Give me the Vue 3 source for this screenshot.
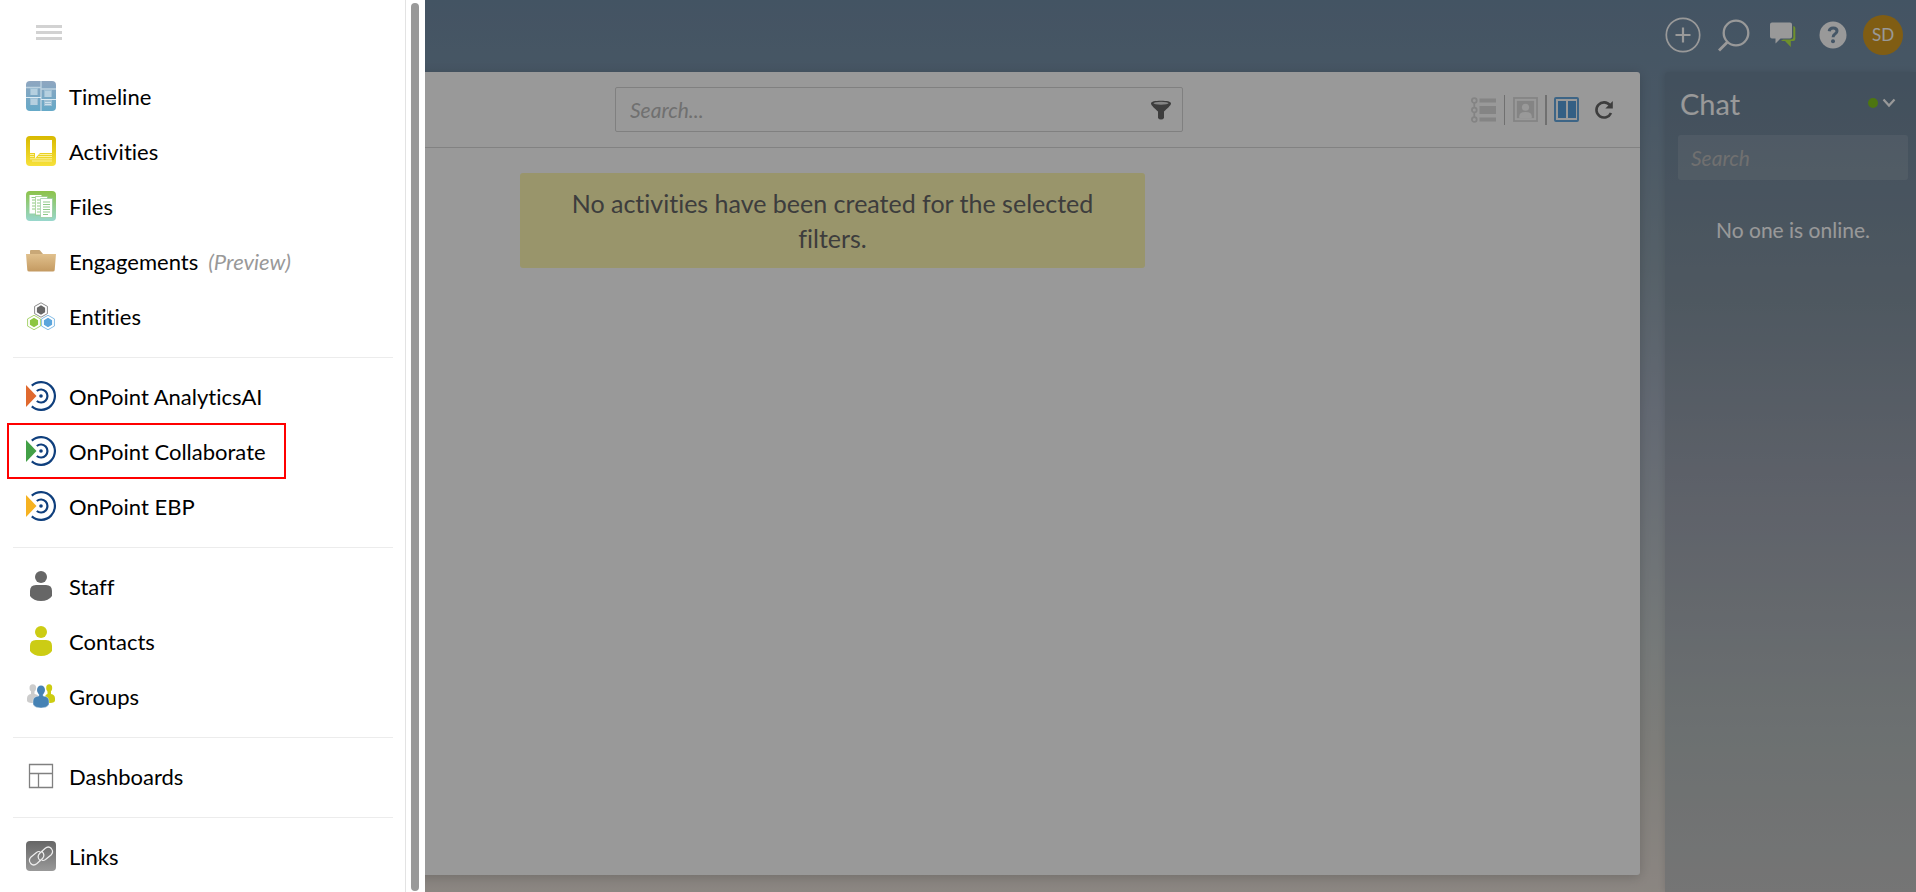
<script setup>
const groups = [
  [
    { name: 'Timeline', icon: 'timeline' },
    { name: 'Activities', icon: 'activities' },
    { name: 'Files', icon: 'files' },
    { name: 'Engagements', icon: 'folder', note: '(Preview)' },
    { name: 'Entities', icon: 'entities' },
  ],
  [
    { name: 'OnPoint AnalyticsAI', icon: 'onpoint', tone: 'orange' },
    { name: 'OnPoint Collaborate', icon: 'onpoint', tone: 'green', marked: true },
    { name: 'OnPoint EBP', icon: 'onpoint', tone: 'amber' },
  ],
  [
    { name: 'Staff', icon: 'person', tone: 'gray' },
    { name: 'Contacts', icon: 'person', tone: 'lime' },
    { name: 'Groups', icon: 'groups' },
  ],
  [{ name: 'Dashboards', icon: 'dashboards' }],
  [{ name: 'Links', icon: 'links' }],
]
</script>

<template>
  <div class="app">
    <header class="topbar">
      <button class="bare" aria-label="Add">
        <svg width="36" height="36" viewBox="0 0 36 36" fill="none" stroke="#fff">
          <circle cx="18" cy="18" r="16.7" stroke-width="1.7" />
          <path d="M18 10.500v15M10.500 18h15" stroke-width="2.200" />
        </svg>
      </button>
      <button class="bare" aria-label="Search">
        <svg width="32" height="34" viewBox="0 0 32 34" fill="none" stroke="#fff" stroke-width="2.300">
          <circle cx="18" cy="15" r="12.300" />
          <path d="M9.500 24 1 32.500" stroke-width="2.800" />
        </svg>
      </button>
      <button class="bare" aria-label="Messages">
        <svg width="26" height="26" viewBox="0 0 26 26">
          <path d="M23.300 4q2 .5 2 2v11q0 2-2 2h-2.500v6L15 19h-4l2-1.500h8q2.300 0 2.300-2z" fill="#b8f04a" />
          <path d="M2 .5h18q2 0 2 2v12q0 2-2 2H10.500L5.500 21.500v-5H2q-2 0-2-2v-12q0-2 2-2z" fill="#fff" />
        </svg>
      </button>
      <button class="bare help" aria-label="Help">
        <svg width="28" height="28" viewBox="0 0 28 28">
          <circle cx="14" cy="14" r="13.500" fill="#fff" />
          <path d="M10.200 10.300q.4-3.300 4-3.300 3.800 0 3.800 3 0 1.800-2 3.100-1.900 1.200-1.900 3.100" fill="none" stroke="#738fab" stroke-width="3" />
          <circle cx="14" cy="20.300" r="2" fill="#738fab" />
        </svg>
      </button>
      <button class="avatar">SD</button>
    </header>

    <div class="body">
      <main class="panel">
        <div class="toolbar">
          <div class="searchbox">
            <input type="text" placeholder="Search..." aria-label="Search activities" />
            <button class="bare" aria-label="Filter">
              <svg width="22" height="20" viewBox="0 0 22 20">
                <path d="M1 3.500C1 1.500 5 .8 11 .8s10 .7 10 2.700c0 2-4 5-7 8v6.500q-1 1.500-3 1.500t-3-1.500V11.500c-3-3-7-6-7-8z" fill="#666" />
                <ellipse cx="11" cy="3.300" rx="7.500" ry="1.500" fill="#ddd" />
              </svg>
            </button>
          </div>
          <div class="views">
            <button class="bare" aria-label="List view">
              <svg width="26" height="26" viewBox="0 0 26 26" fill="#dcdcdc">
                <path d="M8.500 1.500H25v4H8.500zM8.500 9H25v8H8.500zM8.500 20.500H25v4H8.500z" />
                <g fill="none" stroke="#dcdcdc" stroke-width="1.800">
                  <circle cx="3.300" cy="3.500" r="2.400" /><circle cx="3.300" cy="13" r="2.400" /><circle cx="3.300" cy="22.500" r="2.400" />
                  <path d="M3.300 6v4.500M3.300 15.500V20" />
                </g>
              </svg>
            </button>
            <span class="sep"></span>
            <button class="bare" aria-label="Card view">
              <svg width="25" height="25" viewBox="0 0 26 26">
                <rect x="1" y="1" width="24" height="24" fill="none" stroke="#dcdcdc" stroke-width="1.800" />
                <rect x="4" y="4" width="18" height="18" fill="#dcdcdc" />
                <circle cx="13" cy="10.700" r="3.700" fill="#fff" />
                <path d="M6.500 22v-2q0-4.500 6.500-4.500t6.500 4.500v2z" fill="#fff" />
              </svg>
            </button>
            <span class="sep bold"></span>
            <button class="bare" aria-label="Column view">
              <svg width="25" height="25" viewBox="0 0 25 25">
                <rect x="1" y="1" width="23" height="23" rx="1" fill="none" stroke="#66a9df" stroke-width="2" />
                <path d="M4 4h8v17H4zM14 4h8v17h-8z" fill="#559fdd" />
              </svg>
            </button>
            <button class="bare refresh" aria-label="Refresh">
              <svg width="20" height="20" viewBox="0 0 20 20">
                <path d="M16 5.200A7.600 7.600 0 1 0 17 13" fill="none" stroke="#666" stroke-width="2.600" />
                <path d="M18.800 1v7.500h-7.500z" fill="#666" />
              </svg>
            </button>
          </div>
        </div>
        <p class="notice">No activities have been created for the selected filters.</p>
      </main>

      <aside class="chat">
        <div class="chat-head">
          <h2>Chat</h2>
          <button class="bare status" aria-label="Chat status">
            <span class="dot"></span>
            <svg width="14" height="10" viewBox="0 0 14 10"><path d="M1.500 1.500 7 7.500 12.500 1.500" fill="none" stroke="#fff" stroke-width="2.200" /></svg>
          </button>
        </div>
        <input type="text" placeholder="Search" aria-label="Search chat" />
        <p>No one is online.</p>
      </aside>
    </div>

    <div class="shade"></div>

    <nav class="drawer">
      <div class="menu">
        <button class="bare burger" aria-label="Close menu"><i></i><i></i><i></i></button>
        <ul v-for="(group, g) in groups" :key="g">
          <li v-for="item in group" :key="item.name" :class="{ marked: item.marked }">
            <a href="#">
              <svg width="30" height="30" viewBox="0 0 30 30" :class="item.tone" aria-hidden="true">
                <template v-if="item.icon === 'timeline'">
                  <defs><linearGradient id="tl" x2="0" y2="1"><stop stop-color="#8fa6c0" /><stop offset="1" stop-color="#65a9c8" /></linearGradient></defs>
                  <rect width="30" height="30" rx="4" fill="url(#tl)" />
                  <path d="M0 6.500h15M15 8h15M15 0v30" stroke="#bdd2e0" stroke-width="1.400" />
                  <path d="M0 16.500h15M15 18.500h15" stroke="#dcebf3" stroke-width="1.200" />
                  <path d="M4 7h8v7H4zM18 9h8v7h-8zM4 17h8v7H4zM18 19h8v6h-8z" fill="#9dbfd4" />
                  <path d="M5 9h6M5 11h6M5 13h6M19 11h6M19 13h6M19 15h6M5 19h6M5 21h6M5 23h6M19 21.500h6M19 23.500h6" stroke="#d3e4ee" stroke-width=".9" />
                </template>
                <template v-else-if="item.icon === 'activities'">
                  <defs><linearGradient id="ac" x2="0" y2="1"><stop stop-color="#d8b900" /><stop offset="1" stop-color="#f7e13a" /></linearGradient></defs>
                  <rect width="30" height="30" rx="4" fill="url(#ac)" />
                  <path d="M4 4h22v13H14l-5 5.500V17H4z" fill="#fff" />
                  <path d="M4 18.500h4M13.500 18.500H26M4 20.500h4M12 20.500h14M4 22.800h22M6 25h20" stroke="#fbf2a0" stroke-width="1" />
                </template>
                <template v-else-if="item.icon === 'files'">
                  <defs><linearGradient id="fi" x2="0" y2="1"><stop stop-color="#8cc34a" /><stop offset="1" stop-color="#98d7cd" /></linearGradient></defs>
                  <rect width="30" height="30" rx="4" fill="url(#fi)" />
                  <path d="M3.500 4h12v18.500h-12z" fill="#fff" />
                  <path d="M5.500 6.500h4M6 9h3M6 12h3M6 15h3M6 18h3" stroke="#91ca82" />
                  <path d="M9.500 5.500h12V24h-12z" fill="#fff" stroke="#91c77e" stroke-width=".7" />
                  <path d="M11 9h3M11 12h3M11 15h3M11 18h3M11 21h3" stroke="#91ca82" />
                  <path d="M14.500 7.500h12v19h-12z" fill="#fff" stroke="#91c99b" stroke-width=".7" />
                  <path d="M17 11h7M17 13.500h7M17 16h7M17 18.500h7M17 21h7M17 23.500h5" stroke="#8fc98a" />
                </template>
                <template v-else-if="item.icon === 'folder'">
                  <defs><linearGradient id="fo" x2="0" y2="1"><stop stop-color="#e0c08d" /><stop offset="1" stop-color="#c49a61" /></linearGradient></defs>
                  <path d="M4 9V5q0-1 1-1h8q1 0 1.500 1L17 8h9v3H4z" fill="#c9a877" />
                  <path d="M0 8h30l-1.300 16q0 1.500-2 1.500H3.300q-2 0-2-1.500z" fill="url(#fo)" />
                </template>
                <template v-else-if="item.icon === 'entities'">
                  <g v-for="h in [['#666', 15, 9], ['#8cc63f', 8, 21.500], ['#5ba5dc', 22, 21.500]]" :key="h[0]" :transform="`translate(${h[1]} ${h[2]})`">
                    <path d="M0-7.200 6.400-3.600v7.200L0 7.200-6.400 3.600v-7.200z" fill="#fff" :stroke="h[0]" stroke-width="1" stroke-opacity=".75" />
                    <path d="M0-4.700 4.100-2.350v4.700L0 4.700-4.100 2.350v-4.700z" :fill="h[0]" />
                  </g>
                </template>
                <template v-else-if="item.icon === 'onpoint'">
                  <path d="M0 4v22l10.500-11z" fill="currentColor" />
                  <g fill="none" stroke="#0f3f7d" stroke-width="2.200">
                    <path d="M5.800 4.600A13.900 13.900 0 1 1 5.800 25.400" />
                    <path d="M10.800 10A6.500 6.500 0 1 1 10.800 20" />
                  </g>
                  <circle cx="15" cy="15" r="1.800" fill="#0f3f7d" />
                </template>
                <template v-else-if="item.icon === 'person'">
                  <circle cx="15" cy="6" r="6" fill="currentColor" />
                  <path d="M10 14h10q6 0 6 6v5q-3.500 5-11 5T4 25v-5q0-6 6-6z" fill="currentColor" />
                </template>
                <template v-else-if="item.icon === 'groups'">
                  <g fill="#ccc"><ellipse cx="6.800" cy="7" rx="3.300" ry="3.700" /><path d="M5 10h3.500v3q4.500.5 4.500 4v5H6q-5-.5-5-2.500v-2q0-4 4-4.500z" /></g>
                  <g fill="#cc1"><ellipse cx="23.200" cy="7" rx="3" ry="3.700" /><path d="M21.500 10H25v3q4 .5 4 4.500v2q0 2-5 2.500h-5v-5q0-3.500 2.500-4z" /></g>
                  <g fill="#4682b4" stroke="#fff" stroke-width=".4"><path d="M12.800 14V11q-1.800-5.800 2.200-5.800t2.200 5.800v4q5.800.5 5.800 5v3.500q-2 3.500-8 3.500t-8-3.500V20q0-4.500 5.800-5z" /><ellipse cx="15" cy="9" rx="4" ry="4.500" stroke="none" /></g>
                </template>
                <template v-else-if="item.icon === 'dashboards'">
                  <path d="M3.500 3.500h23v23h-23zM3.500 12.500h23M12.500 12.500v14" fill="none" stroke="#808080" stroke-width="1.300" />
                </template>
                <template v-else>
                  <defs><linearGradient id="li" x2="0" y2="1"><stop stop-color="#666" /><stop offset="1" stop-color="#999" /></linearGradient></defs>
                  <rect width="30" height="30" rx="4" fill="url(#li)" />
                  <g fill="none" stroke="#eee" stroke-width="1.200" stroke-linecap="round" stroke-linejoin="round">
                    <path d="M14 19.500Q10.500 16 13.500 12.500L19 7.500Q22.500 4.500 25.300 7.500 28 11 25 14L19.500 18.500Q17.500 20 16.200 19.200" />
                    <path d="M16 10.500Q19.500 14 16.500 17.500L11 22.500Q7.500 25.500 4.700 22.500 2 19 5 16L10.500 11.500Q12.500 10 13.800 10.800" />
                  </g>
                </template>
              </svg>
              <span>{{ item.name }}</span>
              <em v-if="item.note">{{ item.note }}</em>
            </a>
          </li>
        </ul>
      </div>
      <div class="track"><div class="thumb"></div></div>
    </nav>
  </div>
</template>

<style>
body {
  margin: 0;
}
</style>

<style scoped>
.app {
  min-height: 100vh;
  display: flex;
  flex-direction: column;
  box-sizing: border-box;
  font-family: Lato, "Open Sans", sans-serif;
  font-size: 22px;
  font-variant-ligatures: none;
  background: linear-gradient(#718ca6 0%, #7a92a8 12%, #8fa1ae 30%, #a5afbf 46%, #c4caca 72%, #d2d1cb 84%, #e8dfd8 100%);
}
.bare {
  border: 0;
  padding: 0;
  background: none;
  display: flex;
  cursor: pointer;
}
.topbar {
  height: 72px;
  box-sizing: border-box;
  display: flex;
  align-items: center;
  justify-content: flex-end;
  padding: 0 13px 3px 0;
}
.topbar .bare {
  margin-right: 17px;
}
.topbar .bare:nth-child(2) {
  margin-right: 20px;
}
.topbar .bare:nth-child(3) {
  margin-right: 23px;
}
.topbar .help {
  margin-right: 16px;
}
.avatar {
  width: 40px;
  height: 40px;
  padding: 0;
  border: 0;
  border-radius: 50%;
  background: #d69c20;
  color: #fff;
  font: 17px Lato, sans-serif;
}
.body {
  flex: 1;
  display: flex;
}
.panel {
  flex: 1;
  margin: 0 25px 17px;
  background: #fff;
  border-radius: 0 3px 3px 3px;
  box-shadow: 0 2px 12px rgba(0, 0, 0, .18);
}
.toolbar {
  display: flex;
  align-items: center;
  justify-content: flex-end;
  height: 75px;
  padding-right: 26px;
  border-bottom: 1px solid #d9d9d9;
}
.searchbox {
  width: 568px;
  height: 45px;
  box-sizing: border-box;
  display: flex;
  align-items: center;
  margin-right: 288px;
  padding: 0 10px 0 14px;
  border: 1px solid #d5d5d5;
  border-radius: 2px;
}
.searchbox input {
  flex: 1;
  min-width: 0;
  padding: 0;
  border: 0;
  outline: 0;
  background: none;
  font: 21px Lato, sans-serif;
}
.searchbox input::placeholder {
  color: #bbb;
  font-style: italic;
}
.views {
  display: flex;
  align-items: center;
}
.sep {
  width: 1px;
  height: 30px;
  margin: 0 8px 0 7px;
  background: #bbb;
}
.sep.bold {
  width: 2px;
  margin: 0 7px;
}
.refresh {
  margin-left: 15px;
}
.notice {
  box-sizing: border-box;
  max-width: 625px;
  margin: 25px auto;
  padding: 13px 25px 12px;
  border-radius: 3px;
  background: #fff8b3;
  color: #666;
  font-size: 25px;
  line-height: 35px;
  text-align: center;
}
.chat {
  width: 251px;
  box-sizing: border-box;
  padding: 13px 8px 0 13px;
  border-radius: 3px 0 0 0;
  background: linear-gradient(#6e859b, #8393a1 28%, #9da3b0 52%, #b4bbbc 80%, #c3c3c3);
  color: #fff;
  box-shadow: -1px 0 6px rgba(0, 0, 0, .1);
}
.chat-head {
  display: flex;
  align-items: center;
  justify-content: space-between;
  height: 36px;
  padding: 0 12px 0 2px;
}
.chat h2 {
  margin: 0;
  font-weight: 400;
  font-size: 29px;
}
.status {
  align-items: center;
  gap: 4px;
}
.dot {
  width: 10px;
  height: 10px;
  border-radius: 50%;
  background: #80c41c;
}
.chat input {
  display: block;
  width: 100%;
  height: 45px;
  box-sizing: border-box;
  margin: 14px 0 37px;
  padding: 0 13px;
  border: 0;
  border-radius: 3px;
  background: rgba(255, 255, 255, .12);
  font: 21px Lato, sans-serif;
}
.chat input::placeholder {
  color: #bbb;
  font-style: italic;
}
.chat p {
  margin: 0;
  font-size: 21px;
  text-align: center;
}
.shade {
  position: fixed;
  inset: 0;
  background: rgba(0, 0, 0, .4);
}
.drawer {
  position: fixed;
  inset: 0 auto 0 0;
  width: 425px;
  display: flex;
  background: #fff;
}
.menu {
  flex: 1;
  border-right: 1px solid #e3e3e3;
  overflow: hidden;
}
.track {
  width: 19px;
  box-sizing: border-box;
  padding: 3px 6px 1px 5px;
}
.thumb {
  height: 100%;
  border-radius: 4px;
  background: #999;
}
.burger {
  flex-direction: column;
  gap: 3px;
  margin: 25px 0 29px 36px;
}
.burger i {
  width: 26px;
  height: 3px;
  background: #d2d2d2;
}
.menu ul {
  list-style: none;
  margin: 0 12px 0 13px;
  padding: 0;
}
.menu ul + ul {
  margin-top: 13px;
  padding-top: 11px;
  border-top: 1px solid #ececec;
}
.menu li {
  position: relative;
}
.menu a {
  display: flex;
  align-items: center;
  height: 30px;
  padding: 12px 13px 13px;
  color: #000;
  text-decoration: none;
}
.menu a svg {
  margin-right: 13px;
}
.menu em {
  margin-left: 10px;
  color: #999;
}
.marked::after {
  content: "";
  position: absolute;
  left: -6px;
  top: -1px;
  width: 275px;
  height: 52px;
  border: 2px solid #f00;
  pointer-events: none;
}
.orange { color: #e0692e; }
.green { color: #43a047; }
.amber { color: #f6b221; }
.gray { color: #666; }
.lime { color: #cccc14; }
</style>
